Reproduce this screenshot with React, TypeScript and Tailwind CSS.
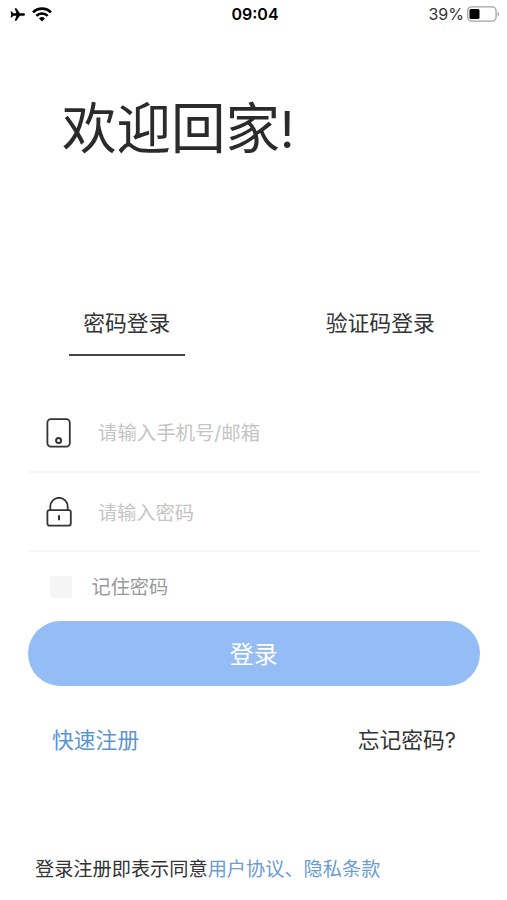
import React, { useState } from 'react';

type LoginMode = 'password' | 'code';

function StatusBar() {
  return (
    <div className="grid h-7 grid-cols-3 items-center pl-[10px] pr-[7px] font-['Inter',sans-serif] text-black">
      <div className="flex items-center gap-[7px]">
        <svg className="h-[13px] w-[15px]" viewBox="0 0 15 13" fill="currentColor">
          <path d="M15 6.5c0-.8-.8-1.300-1.800-1.300H9.900L6.400.3H4.700l1.700 4.900H3.300L1.900 3.500H.6l.7 3-.7 3h1.300l1.400-1.700h3.100l-1.700 4.900h1.700l3.500-4.900h3.300c1 0 1.800-.5 1.800-1.300z" />
        </svg>
        <svg className="h-[15px] w-5" viewBox="0 0 20 15" fill="none" stroke="currentColor" strokeWidth="2.600">
          <path d="M1 5.400a12.700 12.700 0 0 1 18 0" />
          <path d="M4.300 8.900a8 8 0 0 1 11.400 0" />
          <path d="M10 14.500l-3-3a4.300 4.300 0 0 1 6 0z" fill="currentColor" stroke="none" />
        </svg>
      </div>
      <span className="text-center text-[16px] font-semibold">09:04</span>
      <div className="flex items-center justify-end gap-[3px]">
        <span className="text-[16px] text-[#333]">39%</span>
        <svg className="h-4 w-[33px]" viewBox="0 0 33 16" fill="none">
          <rect x="0.7" y="0.9" width="28.400" height="14.200" rx="4" stroke="#a3a3a3" strokeWidth="1.300" />
          <rect x="2.500" y="3" width="10" height="10" rx="1.500" fill="#000" />
          <path d="M30.700 5.700c1.800.7 1.800 3.900 0 4.600z" fill="#a3a3a3" />
        </svg>
      </div>
    </div>
  );
}

function PhoneIcon() {
  return (
    <svg className="h-[30px] w-[26px]" viewBox="0 0 26 30" fill="none" stroke="#333" strokeWidth="1.800">
      <rect x="1.400" y="1.200" width="22.400" height="27.400" rx="3.500" />
      <circle cx="12.600" cy="22.500" r="2.500" strokeWidth="2" />
    </svg>
  );
}

function LockIcon() {
  return (
    <svg className="h-[30px] w-[26px]" viewBox="0 0 26 30" fill="none" stroke="#333" strokeWidth="1.800">
      <rect x="1.400" y="13.200" width="23.400" height="15.400" rx="2" />
      <path d="M4.300 13V9.500a8.700 8.700 0 0 1 17.400 0V13" />
      <path d="M13 18.200v5" strokeWidth="2" />
    </svg>
  );
}

export default function App() {
  const [mode, setMode] = useState<LoginMode>('password');
  const [remember, setRemember] = useState(false);

  return (
    <div className="flex h-[900px] w-[507px] flex-col overflow-hidden bg-white font-['Noto_Sans_CJK_SC',sans-serif] text-[#333]">
      <StatusBar />

      <h1 className="mt-[57px] h-20 pl-[62px] text-[54.500px] leading-[80px] text-[#2b2b2b]">
        欢迎回家<span className="font-['Inter',sans-serif] text-[50px] leading-none">!</span>
      </h1>

      <div className="mt-[135px] grid grid-cols-2 text-[21.800px] leading-[44px]">
        <button onClick={() => setMode('password')} className="flex flex-col items-center">
          <span>密码登录</span>
          <span className={`mt-[10px] ml-px h-[1.500px] w-[116px] ${mode === 'password' ? 'bg-[#444]' : 'bg-transparent'}`} />
        </button>
        <button onClick={() => setMode('code')} className="flex flex-col items-center">
          <span>验证码登录</span>
          <span className={`mt-[10px] h-[1.500px] w-[116px] ${mode === 'code' ? 'bg-[#444]' : 'bg-transparent'}`} />
        </button>
      </div>

      <form className="mt-[38px] flex flex-col pl-[27.500px] pr-[27px]" onSubmit={(e) => e.preventDefault()}>
        <label className="flex h-[79px] items-center gap-[26px] border-b-2 border-[#f7f7f7] pl-[18.500px] pt-[2px]">
          <PhoneIcon />
          <input
            type="text"
            placeholder="请输入手机号/邮箱"
            className="h-10 flex-1 font-['Inter','Noto_Sans_CJK_SC',sans-serif] text-[19.400px] outline-none placeholder:text-[#c4c4c4]"
          />
        </label>
        <label className="flex h-[79px] items-center gap-[26px] border-b-2 border-[#f7f7f7] pl-[18.500px] pt-[2px]">
          <LockIcon />
          <input
            type="password"
            placeholder="请输入密码"
            className="h-10 flex-1 text-[19.200px] outline-none placeholder:text-[#c4c4c4]"
          />
        </label>

        <label className="flex h-[69px] items-center gap-5 pl-[22px] pt-px text-[19.200px] text-[#999]">
          <input
            type="checkbox"
            checked={remember}
            onChange={() => setRemember(!remember)}
            className="h-[22px] w-[22px] appearance-none rounded-[3px] bg-[#f5f5f5] checked:bg-[#94bcf5]"
          />
          记住密码
        </label>

        <button className="h-[65px] w-full rounded-full bg-[#94bcf5] text-[24px] text-white">登录</button>
      </form>

      <div className="mt-[31px] flex items-center justify-between pl-[52px] pr-[51px] text-[21.800px] leading-[44px]">
        <a href="#" className="text-[#5b95d5]">快速注册</a>
        <a href="#">
          忘记密码<span className="font-['Inter',sans-serif]">?</span>
        </a>
      </div>

      <p className="mt-[86px] pl-[35px] text-[19.200px] leading-[40px]">
        登录注册即表示同意<a href="#" className="text-[#6b9bd2]">用户协议、隐私条款</a>
      </p>
    </div>
  );
}
